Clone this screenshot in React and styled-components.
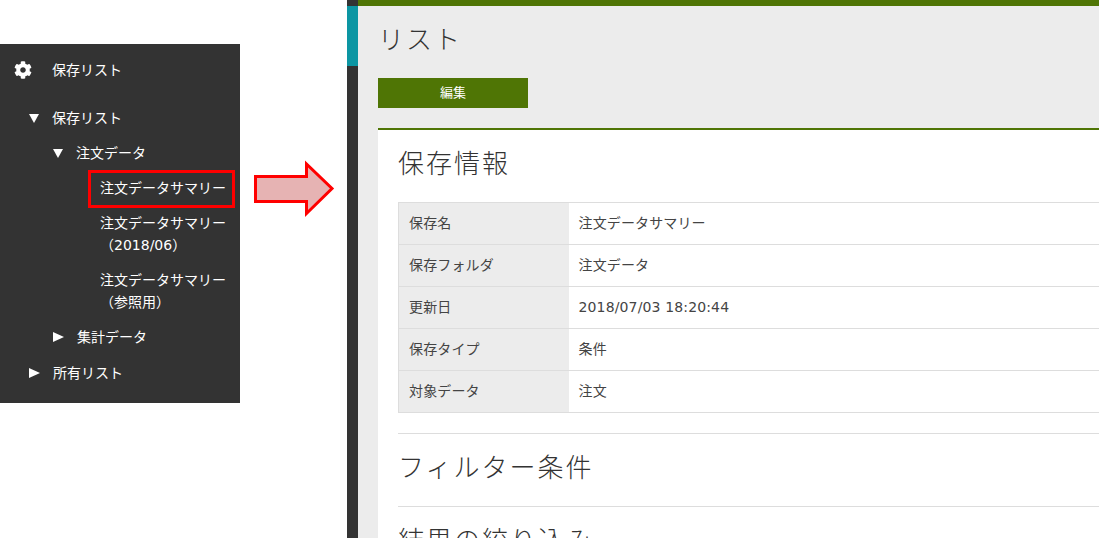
import styled, { createGlobalStyle } from "styled-components";
import { FaCog } from "react-icons/fa";

const GlobalStyle = createGlobalStyle`
  html, body {
    margin: 0;
    height: 538px;
    overflow: hidden;
    background: #fff;
  }
  body {
    font-family: "DejaVu Sans", "Noto Sans CJK JP", sans-serif;
    font-size: 14px;
    line-height: 22px;
    color: #333;
  }
`;

const Page = styled.div`
  display: flex;
  align-items: flex-start;
  height: 538px;
`;

const Sidebar = styled.nav`
  flex: none;
  width: 240px;
  height: 359px;
  margin-top: 44px;
  background: #333;
  color: #fff;
`;

const SideHeader = styled.div`
  display: flex;
  align-items: center;
  height: 52px;
  padding-left: 14px;
  svg {
    width: 18px;
    height: 18px;
    margin-right: 21px;
    margin-left: 0;
    margin-top: -1px;
  }
`;

const HeaderLabel = styled.span`
  margin-left: -1px;
`;

const Branch = styled.div`
  display: flex;
  align-items: center;
  height: 22px;
  margin-top: ${(p) => p.$top}px;
  padding-left: ${(p) => p.$indent}px;
`;

const Caret = styled.span`
  flex: none;
  width: 0;
  height: 0;
  margin-right: 13px;
  border-style: solid;
  ${(p) =>
    p.$open
      ? `
    border-width: 9px 5.5px 0 5.5px;
    border-color: #fff transparent transparent transparent;
  `
      : `
    border-width: 5.5px 0 5.5px 11px;
    border-color: transparent transparent transparent #fff;
  `}
`;

const Leaf = styled.div`
  position: relative;
  margin: 13px 0 0 100px;
  ${(p) =>
    p.$selected &&
    `
    &::after {
      content: "";
      position: absolute;
      top: -7px;
      bottom: -9px;
      left: -12px;
      right: 5px;
      border: 3px solid #f00;
    }
  `}
`;

const Arrow = styled.svg`
  flex: none;
  width: 81px;
  height: 58px;
  margin: 160px 12px 0 14px;
`;

const Rail = styled.div`
  flex: none;
  width: 11px;
  height: 538px;
  padding-top: 6px;
  box-sizing: border-box;
  background: #333;
`;

const RailMark = styled.div`
  height: 60px;
  background: #0c96a3;
`;

const Main = styled.main`
  flex: 1;
  min-width: 0;
  height: 538px;
  box-sizing: border-box;
  overflow: hidden;
  padding-left: 20px;
  background: #ececec;
  border-top: 6px solid #4f7505;
`;

const PageTitle = styled.h1`
  margin: 16px 0 0;
  font-size: 26px;
  line-height: 36px;
  font-weight: 300;
  letter-spacing: 2px;
`;

const EditButton = styled.button`
  display: block;
  width: 150px;
  height: 30px;
  margin-top: 20px;
  padding: 0;
  border: 0;
  background: #4f7505;
  color: #fff;
  font: inherit;
  font-size: 13px;
`;

const Card = styled.section`
  margin-top: 20px;
  width: 1000px;
  min-height: 400px;
  padding-left: 20px;
  background: #fff;
  border-top: 2px solid #4f7505;
`;

const SectionTitle = styled.h2`
  margin: 0;
  padding-top: 16px;
  font-size: 26px;
  line-height: 36px;
  font-weight: 300;
  letter-spacing: 2px;
`;

const Divider = styled.hr`
  height: 1px;
  margin: 20px 0 0;
  border: 0;
  background: #ddd;
`;

const InfoTable = styled.table`
  width: 100%;
  margin-top: 20px;
  border-collapse: collapse;
  border: 1px solid #ddd;
  th,
  td {
    height: 42px;
    box-sizing: border-box;
    padding: 0 0 1px 10px;
    border-bottom: 1px solid #ddd;
    text-align: left;
    font-weight: 400;
    color: #444;
    letter-spacing: 0.01em;
  }
  th {
    width: 170px;
    background: #ececec;
  }
`;

const rows = [
  ["保存名", "注文データサマリー"],
  ["保存フォルダ", "注文データ"],
  ["更新日", "2018/07/03 18:20:44"],
  ["保存タイプ", "条件"],
  ["対象データ", "注文"],
];

export default function App() {
  return (
    <Page>
      <GlobalStyle />
      <Sidebar>
        <SideHeader>
          <FaCog />
          <HeaderLabel>保存リスト</HeaderLabel>
        </SideHeader>
        <Branch $top={11} $indent={29}>
          <Caret $open />
          保存リスト
        </Branch>
        <Branch $top={13} $indent={53}>
          <Caret $open />
          注文データ
        </Branch>
        <Leaf $selected>注文データサマリー</Leaf>
        <Leaf>
          注文データサマリー
          <br />
          （2018/06）
        </Leaf>
        <Leaf>
          注文データサマリー
          <br />
          （参照用）
        </Leaf>
        <Branch $top={13} $indent={53}>
          <Caret />
          集計データ
        </Branch>
        <Branch $top={14} $indent={29}>
          <Caret />
          所有リスト
        </Branch>
      </Sidebar>
      <Arrow viewBox="0 0 81 58">
        <path
          d="M1.5 16.5H52.5V4L78 28.5L52.5 53.5V41.5H1.5Z"
          fill="#e6b3b3"
          stroke="#f00"
          strokeWidth="3"
        />
      </Arrow>
      <Rail>
        <RailMark />
      </Rail>
      <Main>
        <PageTitle>リスト</PageTitle>
        <EditButton>編集</EditButton>
        <Card>
          <SectionTitle>保存情報</SectionTitle>
          <InfoTable>
            <tbody>
              {rows.map(([name, value]) => (
                <tr key={name}>
                  <th>{name}</th>
                  <td>{value}</td>
                </tr>
              ))}
            </tbody>
          </InfoTable>
          <Divider />
          <SectionTitle>フィルター条件</SectionTitle>
          <Divider />
          <SectionTitle>結果の絞り込み</SectionTitle>
        </Card>
      </Main>
    </Page>
  );
}
